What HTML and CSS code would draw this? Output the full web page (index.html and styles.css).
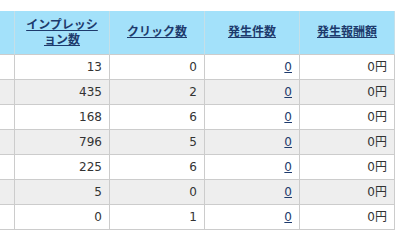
FILE: index.html
```html
<!DOCTYPE html>
<html lang="ja">
<head>
<meta charset="utf-8">
<link rel="stylesheet" href="styles.css">
</head>
<body>
<table class="report">
  <colgroup>
    <col class="c-lead">
    <col class="c-num">
    <col class="c-num">
    <col class="c-num">
    <col class="c-num">
  </colgroup>
  <thead>
    <tr>
      <th class="lead"></th>
      <th><a href="#">インプレッション数</a></th>
      <th><a href="#">クリック数</a></th>
      <th><a href="#">発生件数</a></th>
      <th><a href="#">発生報酬額</a></th>
    </tr>
  </thead>
  <tbody>
    <tr><td class="lead"></td><td>13</td><td>0</td><td><a href="#">0</a></td><td>0円</td></tr>
    <tr class="alt"><td class="lead"></td><td>435</td><td>2</td><td><a href="#">0</a></td><td>0円</td></tr>
    <tr><td class="lead"></td><td>168</td><td>6</td><td><a href="#">0</a></td><td>0円</td></tr>
    <tr class="alt"><td class="lead"></td><td>796</td><td>5</td><td><a href="#">0</a></td><td>0円</td></tr>
    <tr><td class="lead"></td><td>225</td><td>6</td><td><a href="#">0</a></td><td>0円</td></tr>
    <tr class="alt"><td class="lead"></td><td>5</td><td>0</td><td><a href="#">0</a></td><td>0円</td></tr>
    <tr><td class="lead"></td><td>0</td><td>1</td><td><a href="#">0</a></td><td>0円</td></tr>
  </tbody>
</table>
</body>
</html>
```

FILE: styles.css
```css
html, body {
  margin: 0;
  padding: 0;
  background: #ffffff;
}

body {
  padding-top: 11px;
  font-family: "DejaVu Sans", "Noto Sans CJK JP", sans-serif;
  font-size: 12px;
  color: #333333;
}

.report {
  border-collapse: separate;
  border-spacing: 0;
  table-layout: fixed;
  width: 395px;
}

.c-lead { width: 15px; }
.c-num { width: 95px; }

.report th,
.report td {
  box-sizing: border-box;
  border-right: 1px solid #cccccc;
  border-bottom: 1px solid #cccccc;
}

.report th {
  background: #a3e1fa;
  height: 44px;
  padding: 0 8px;
  text-align: center;
  vertical-align: middle;
  font-weight: bold;
  line-height: 15px;
  line-break: loose;
  border-right-color: #c5dfe8;
}

.report td {
  height: 25px;
  padding: 0 7px;
  text-align: right;
  vertical-align: middle;
  line-height: 15px;
}

.report .lead {
  padding: 0;
}

.report tr.alt td {
  background: #eeeeee;
}

.report a {
  color: #1d3a6c;
  text-decoration: underline;
}
```
